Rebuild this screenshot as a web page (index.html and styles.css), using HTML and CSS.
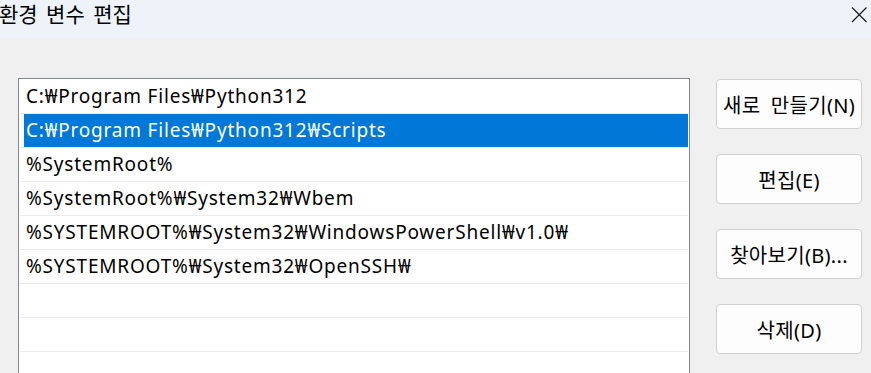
FILE: index.html
```html
<!DOCTYPE html>
<html lang="ko">
<head>
<meta charset="utf-8">
<title>환경 변수 편집</title>
<link rel="stylesheet" href="styles.css">
</head>
<body>
<div class="window">
  <div class="titlebar">
    <span class="title">환경 변수 편집</span>
    <span class="close">
      <svg width="16" height="16" viewBox="0 0 16 16"><path d="M1 0.5 L15.5 15 M15.5 0.5 L1 15" stroke="#1a1a1a" stroke-width="1.2" fill="none"/></svg>
    </span>
  </div>
  <div class="content">
    <div class="listbox">
      <div class="row"><span class="cell">C:₩Program Files₩Python312</span></div>
      <div class="row"><span class="cell selected">C:₩Program Files₩Python312₩Scripts</span></div>
      <div class="row"><span class="cell">%SystemRoot%</span></div>
      <div class="row"><span class="cell">%SystemRoot%₩System32₩Wbem</span></div>
      <div class="row"><span class="cell">%SYSTEMROOT%₩System32₩WindowsPowerShell₩v1.0₩</span></div>
      <div class="row"><span class="cell">%SYSTEMROOT%₩System32₩OpenSSH₩</span></div>
      <div class="row"><span class="cell"></span></div>
      <div class="row"><span class="cell"></span></div>
      <div class="row"><span class="cell"></span></div>
    </div>
    <div class="buttons">
      <button class="btn">새로 만들기(N)</button>
      <button class="btn">편집(E)</button>
      <button class="btn">찾아보기(B)...</button>
      <button class="btn">삭제(D)</button>
    </div>
  </div>
</div>
</body>
</html>
```
FILE: styles.css
```css
html, body {
  margin: 0;
  padding: 0;
  width: 871px;
  height: 373px;
  overflow: hidden;
  background: #f0f0f0;
  font-family: "Noto Sans", "Noto Sans CJK KR", sans-serif;
  color: #000;
}
.window {
  display: flex;
  flex-direction: column;
  height: 373px;
  overflow: hidden;
}
.titlebar {
  height: 39px;
  background: #eef2f9;
  display: flex;
  align-items: flex-start;
  justify-content: space-between;
  flex-shrink: 0;
}
.title {
  font-size: 21px;
  line-height: 28px;
  word-spacing: 3px;
  margin-left: -1px;
}
.close {
  display: flex;
  padding: 7px 4px 0 0;
}
.content {
  display: flex;
  align-items: flex-start;
  padding: 39px 0 0 18px;
  overflow: hidden;
  flex: 1;
}
.listbox {
  width: 668px;
  height: 320px;
  border: 1px solid #828790;
  background: #fff;
  padding: 1px 1px 0 1px;
  flex-shrink: 0;
}
.row {
  height: 33px;
  border-bottom: 1px solid #ebebeb;
  display: flex;
}
.cell {
  flex: 1;
  margin-left: 4px;
  padding-left: 2px;
  font-size: 19px;
  letter-spacing: 0.8px;
  line-height: 33px;
  white-space: nowrap;
}
.cell.selected {
  background: #0078d7;
  color: #fff;
}
.buttons {
  display: flex;
  flex-direction: column;
  gap: 25px;
  margin-left: 26px;
  padding-top: 1px;
}
.btn {
  width: 146px;
  height: 50px;
  background: #fdfdfd;
  border: 1px solid #d0d0d0;
  border-radius: 4px;
  font-family: "Noto Sans", "Noto Sans CJK KR", sans-serif;
  font-size: 20px;
  letter-spacing: 0.3px;
  word-spacing: 5px;
  color: #000;
  padding: 0;
}
```
